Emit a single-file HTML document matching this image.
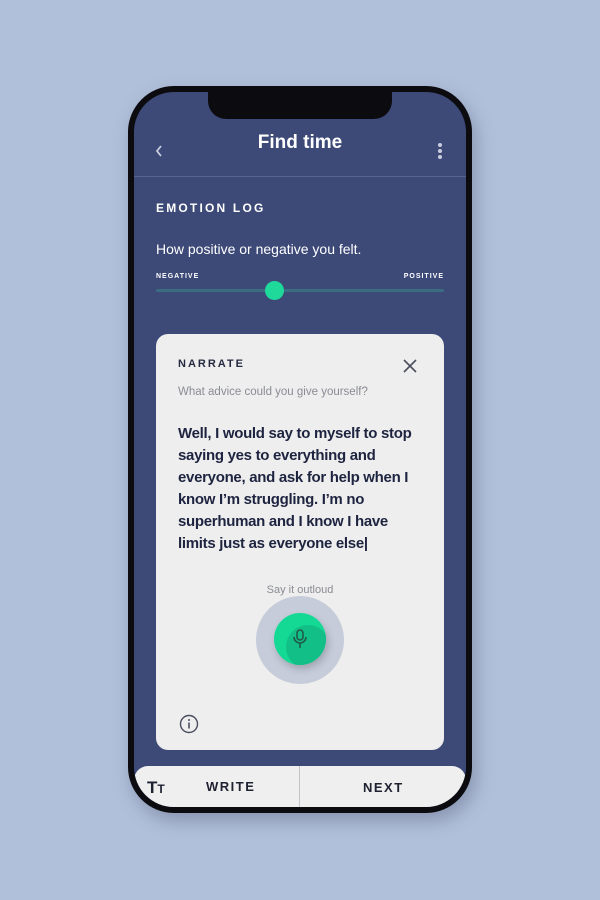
<!DOCTYPE html>
<html><head><style>
*{margin:0;padding:0;box-sizing:border-box}
body{width:600px;height:900px;background:#b1c0da;position:relative;overflow:hidden;font-family:"Liberation Sans",sans-serif}
.phone{position:absolute;left:128px;top:86px;width:344px;height:727px;background:#0c0c10;border-radius:46px;box-shadow:4px 8px 18px rgba(60,70,100,.35)}
.screen{position:absolute;left:6px;top:6px;width:332px;height:715px;background:#3d4a78;border-radius:40px;overflow:hidden}
.notch{position:absolute;left:74px;top:0;width:184px;height:27px;background:#0c0c10;border-radius:0 0 18px 18px}
.t{position:absolute;color:#fff}
</style></head><body>
<div class="phone"><div class="screen">
<div class="notch"></div>
<div class="t" style="left:0;width:332px;top:40px;text-align:center;font-size:19px;font-weight:bold">Find time</div>
<svg style="position:absolute;left:20px;top:52px" width="10" height="14"><path d="M7 2L3 7l4 5" stroke="#c9cde0" stroke-width="1.8" fill="none"/></svg>
<div style="position:absolute;left:304px;top:51px;width:4px">
<div style="width:4px;height:4px;border-radius:2px;background:#c9cde0;margin-bottom:2px"></div><div style="width:4px;height:4px;border-radius:2px;background:#c9cde0;margin-bottom:2px"></div><div style="width:4px;height:4px;border-radius:2px;background:#c9cde0"></div></div>
<div style="position:absolute;left:0;top:84px;width:332px;height:1px;background:#56638f"></div>
<div class="t" style="left:22px;top:109px;font-size:12px;font-weight:bold;letter-spacing:2.2px">EMOTION LOG</div>
<div class="t" style="left:22px;top:149px;font-size:14px">How positive or negative you felt.</div>
<div class="t" style="left:22px;top:181px;font-size:7px;font-weight:bold;letter-spacing:1px">NEGATIVE</div>
<div class="t" style="right:22px;top:181px;font-size:7px;font-weight:bold;letter-spacing:1px">POSITIVE</div>
<div style="position:absolute;left:22px;top:197px;width:288px;height:3px;border-radius:2px;background:#3a6d80"></div>
<div style="position:absolute;left:131px;top:189px;width:19px;height:19px;border-radius:50%;background:#1fd99a"></div>
<div style="position:absolute;left:22px;top:242px;width:288px;height:416px;background:#eeeeee;border-radius:12px">
<div style="position:absolute;left:22px;top:24px;font-size:11px;font-weight:bold;letter-spacing:2px;color:#252a40">NARRATE</div>
<svg style="position:absolute;left:247px;top:25px" width="14" height="14"><path d="M1 1L13 13M13 1L1 13" stroke="#4a4e5e" stroke-width="1.6"/></svg>
<div style="position:absolute;left:22px;top:52px;font-size:11.5px;color:#8a8c94">What advice could you give yourself?</div>
<div style="position:absolute;left:22px;top:89px;width:250px;font-size:15px;letter-spacing:-0.3px;font-weight:bold;line-height:22px;color:#1e2440">Well, I would say to myself to stop saying yes to everything and everyone, and ask for help when I know I’m struggling. I’m no superhuman and I know I have limits just as everyone else|</div>
<div style="position:absolute;left:0;width:288px;top:250px;text-align:center;font-size:11px;color:#8a8c94">Say it outloud</div>
<div style="position:absolute;left:100px;top:262px;width:88px;height:88px;border-radius:50%;background:#c6ccda"></div>
<div style="position:absolute;left:118px;top:279px;width:52px;height:52px;border-radius:50%;background:#14d994;box-shadow:2px 4px 8px rgba(0,0,0,.2);overflow:hidden">
<div style="position:absolute;left:12px;top:12px;width:44px;height:44px;border-radius:50%;background:#12bf87"></div>
<svg style="position:absolute;left:18px;top:16px" width="16" height="20"><rect x="5" y="1" width="6" height="10" rx="3" fill="none" stroke="#1e5b49" stroke-width="1.6"/><path d="M2 8a6 6 0 0 0 12 0M8 14v5" stroke="#1e5b49" stroke-width="1.6" fill="none"/></svg></div>
<svg style="position:absolute;left:23px;top:380px" width="20" height="20"><circle cx="10" cy="10" r="8.5" stroke="#4a4e5e" stroke-width="1.4" fill="none"/><path d="M10 8.5v6" stroke="#4a4e5e" stroke-width="1.6"/><circle cx="10" cy="6" r="1" fill="#4a4e5e"/></svg>
</div>
<div style="position:absolute;left:0;top:674px;width:332px;height:41px;background:#efefef;border-radius:14px 14px 0 0">
<div style="position:absolute;left:165px;top:0;width:1px;height:41px;background:#c4c4c8"></div>
<div style="position:absolute;left:13px;top:12px;font-size:17px;font-weight:bold;color:#1e2130">T<span style="font-size:12px">T</span></div>
<div style="position:absolute;left:72px;top:13px;font-size:13px;font-weight:bold;letter-spacing:1.5px;color:#1e2130">WRITE</div>
<div style="position:absolute;left:229px;top:14px;font-size:13px;font-weight:bold;letter-spacing:1.5px;color:#1e2130">NEXT</div>
</div>
</div></div>
</body></html>
